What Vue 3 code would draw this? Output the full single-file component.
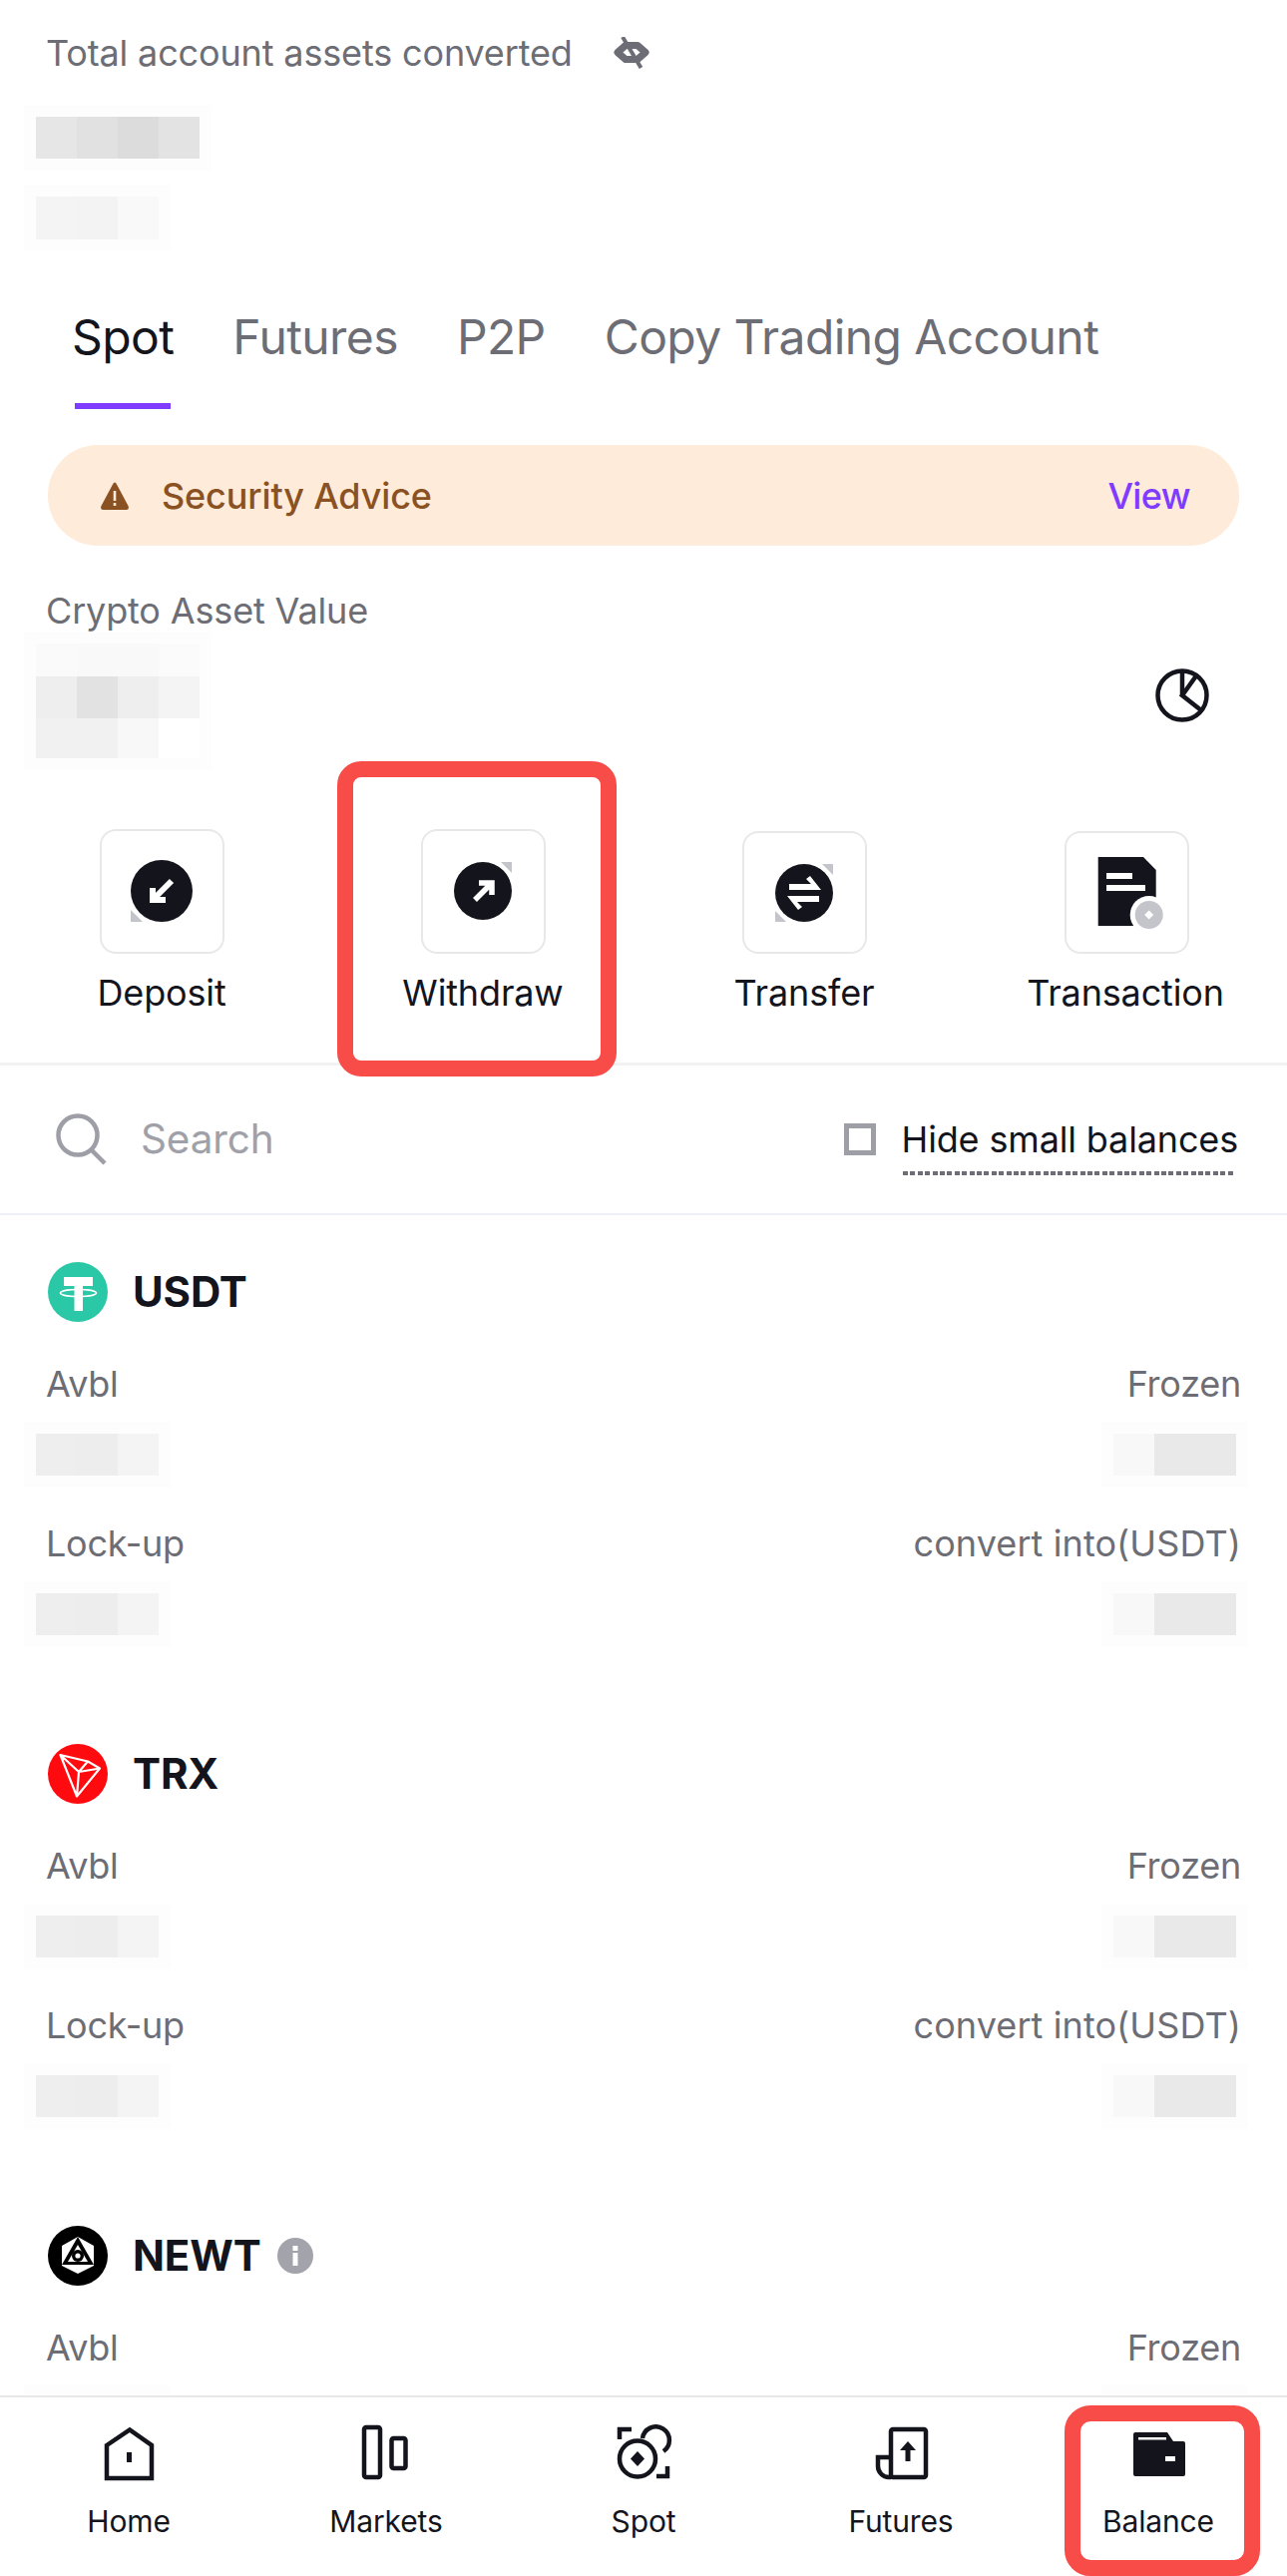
<script setup>
// Balance page of the exchange app. Grey pixel cells are the censored amounts.
const tabs = ['Spot', 'Futures', 'P2P', 'Copy Trading Account']

const totalMain = ['#e6e6e6', '#e1e1e1', '#dcdcdc', '#e3e3e3']
const totalSub = ['#f4f4f4', '#f3f3f3', '#f9f9f9']
const cryptoRows = [
  { h: 33, cells: ['#fafafa', '#f9f9f9', '#f9f9f9', '#fbfbfb'] },
  { h: 42, cells: ['#eeeeee', '#e2e2e2', '#eeeeee', '#f4f4f4'] },
  { h: 40, cells: ['#f1f1f1', '#f1f1f1', '#f8f8f8', '#ffffff'] }
]

const leftCells = ['#eeeeee', '#ededed', '#f4f4f4']
const rightCells = ['#f8f8f8', '#e9e9e9', '#e9e9e9']

// the last coin runs under the bottom bar, only its first row shows
const coins = [
  { name: 'USDT', info: false, cut: false },
  { name: 'TRX', info: false, cut: false },
  { name: 'NEWT', info: true, cut: true }
]

const navItems = ['Home', 'Markets', 'Spot', 'Futures', 'Balance']
</script>

<template>
  <div class="page">
    <main class="content">
      <section class="total">
        <div class="total-title">
          <span>Total account assets converted</span>
          <svg class="eye" viewBox="0 0 36 32" width="36" height="32">
            <path d="M4 15.5 L12 8.5 H24 L32 15.5 L24 22.5 H12 Z" fill="#fff" stroke="#6c6d75" stroke-width="7" stroke-linejoin="round" />
            <path d="M9 0 L27.5 31" stroke="#6c6d75" stroke-width="4" />
          </svg>
        </div>
        <div class="pix total-main">
          <i v-for="(c, n) in totalMain" :key="n" :style="{ background: c }"></i>
        </div>
        <div class="pix total-sub">
          <i v-for="(c, n) in totalSub" :key="n" :style="{ background: c }"></i>
        </div>
      </section>

      <nav class="tabs">
        <div v-for="(t, n) in tabs" :key="t" class="tab" :class="{ active: n === 0 }">
          <span>{{ t }}</span>
          <b v-if="n === 0"></b>
        </div>
      </nav>

      <div class="advice">
        <svg viewBox="0 0 30 30" width="30" height="30">
          <path d="M15 1.5 Q16 1.5 17 3.5 L28.5 25 Q30 29 26.5 29 H3.5 Q0 29 1.5 25 L13 3.5 Q14 1.5 15 1.5 Z" fill="#8a5222" />
          <rect x="13.7" y="10" width="2.6" height="10" fill="#feebd9" />
          <rect x="13.7" y="22" width="2.6" height="3" fill="#feebd9" />
        </svg>
        <span class="advice-text">Security Advice</span>
        <span class="advice-view">View</span>
      </div>

      <div class="crypto-title">Crypto Asset Value</div>
      <div class="crypto-row">
        <div class="crypto-pix">
          <div v-for="(r, n) in cryptoRows" :key="n" class="pix" :style="{ height: r.h + 'px' }">
            <i v-for="(c, k) in r.cells" :key="k" :style="{ background: c }"></i>
          </div>
        </div>
        <svg class="pie" viewBox="0 0 54 54" width="54" height="54" fill="none" stroke="#14151c" stroke-width="4.5">
          <circle cx="27" cy="27" r="24.5" />
          <path d="M42 6 L27 27 L46 42" />
          <path d="M27 3 V27" />
        </svg>
      </div>

      <section class="actions">
        <div class="action">
          <div class="action-box">
            <svg viewBox="0 0 121 121" width="121" height="121">
              <g transform="translate(29 29)">
                <polygon points="0,50 0,62 12,62" fill="#c4c5cb" />
                <circle cx="31" cy="31" r="31" fill="#14151c" />
                <path d="M22 28 V40 H35 M22 40 L41 21" fill="none" stroke="#fff" stroke-width="6" />
              </g>
            </svg>
          </div>
          <span>Deposit</span>
        </div>
        <div class="action">
          <div class="action-box">
            <svg viewBox="0 0 121 121" width="121" height="121">
              <g transform="translate(31 31)">
                <polygon points="47,0 58,0 58,11" fill="#c4c5cb" />
                <circle cx="29" cy="29" r="29" fill="#14151c" />
                <path d="M25 21 H38 V33 M38 21 L21 38" fill="none" stroke="#fff" stroke-width="5.5" />
              </g>
            </svg>
          </div>
          <span>Withdraw</span>
          <div class="mark mark-withdraw"></div>
        </div>
        <div class="action">
          <div class="action-box lower">
            <svg viewBox="0 0 121 119" width="121" height="119">
              <g transform="translate(31 31)">
                <polygon points="47,0 58,0 58,11" fill="#c4c5cb" />
                <polygon points="0,47 0,58 11,58" fill="#c4c5cb" />
                <circle cx="29" cy="29" r="29" fill="#14151c" />
                <polygon points="14,20 36,20 31,15 35,12 46,26 14,26" fill="#fff" />
                <polygon points="44,38 22,38 27,43 23,46 12,32 44,32" fill="#fff" />
              </g>
            </svg>
          </div>
          <span>Transfer</span>
        </div>
        <div class="action">
          <div class="action-box lower">
            <svg viewBox="0 0 121 119" width="121" height="119">
              <g transform="translate(31 24)">
                <polygon points="0.7,0 46,0 58.7,13 58.7,69 0.7,69" fill="#14151c" />
                <rect x="9" y="16" width="26" height="6" fill="#fff" />
                <rect x="9" y="28" width="39" height="6" fill="#fff" />
                <circle cx="51.7" cy="58" r="19" fill="#fff" />
                <circle cx="51.7" cy="58" r="14" fill="#c4c5cb" />
                <polygon points="51.7,53.5 56.2,58 51.7,62.5 47.2,58" fill="#fff" />
              </g>
            </svg>
          </div>
          <span>Transaction</span>
        </div>
      </section>

      <section class="search-row">
        <div class="search">
          <svg viewBox="0 0 54 54" width="54" height="54" fill="none" stroke="#9d9ea6" stroke-width="4.5">
            <circle cx="24" cy="23" r="19.5" />
            <path d="M38 38 L51 51" />
          </svg>
          <span>Search</span>
        </div>
        <div class="hide-small">
          <span class="check"></span>
          <span class="hide-label">Hide small balances</span>
        </div>
      </section>

      <article v-for="coin in coins" :key="coin.name" class="coin">
        <header class="coin-head">
          <svg v-if="coin.name === 'USDT'" viewBox="0 0 60 60" width="60" height="60">
            <circle cx="30" cy="30" r="30" fill="#2bc8a8" />
            <rect x="16" y="15" width="29" height="9" fill="#fff" />
            <rect x="26.5" y="24" width="8.5" height="25" fill="#fff" />
            <ellipse cx="30.5" cy="31" rx="18" ry="3.5" fill="none" stroke="#fff" stroke-width="1.5" />
          </svg>
          <svg v-else-if="coin.name === 'TRX'" viewBox="0 0 60 60" width="60" height="60">
            <circle cx="30" cy="30" r="30" fill="#ff0a0f" />
            <path d="M12.5 11 L40 17.5 L52 24.5 L29 52.5 Z M12.5 11 L31 28 L29 52.5 M31 28 L52 24.5 M31 28 L40 17.5" fill="none" stroke="#fff" stroke-width="2.2" stroke-linejoin="round" />
          </svg>
          <svg v-else viewBox="0 0 60 60" width="60" height="60">
            <circle cx="30" cy="30" r="30" fill="#000" />
            <polygon points="30,11 46,20 46,40 30,48 14,40 14,20" fill="#fff" />
            <polygon points="30,11 46,39 14,39" fill="#000" />
            <polygon points="30,19 40,36 20,36" fill="#fff" />
            <circle cx="30" cy="30" r="6" fill="#000" />
            <circle cx="30" cy="30" r="2.6" fill="#fff" />
          </svg>
          <h2>{{ coin.name }}</h2>
          <svg v-if="coin.info" class="info" viewBox="0 0 36 36" width="36" height="36">
            <circle cx="18" cy="18" r="18" fill="#a2a3ab" />
            <rect x="15.5" y="15" width="5" height="13" fill="#fff" />
            <rect x="15.5" y="8" width="5" height="5" fill="#fff" />
          </svg>
        </header>
        <div class="stats">
          <div class="stat">
            <span>Avbl</span>
            <div class="pix stat-pix"><i v-for="(c, n) in leftCells" :key="n" :style="{ background: c }"></i></div>
          </div>
          <div class="stat right">
            <span>Frozen</span>
            <div class="pix stat-pix"><i v-for="(c, n) in rightCells" :key="n" :style="{ background: c }"></i></div>
          </div>
          <template v-if="!coin.cut">
            <div class="stat">
              <span>Lock-up</span>
              <div class="pix stat-pix"><i v-for="(c, n) in leftCells" :key="n" :style="{ background: c }"></i></div>
            </div>
            <div class="stat right">
              <span class="long">convert into(USDT)</span>
              <div class="pix stat-pix"><i v-for="(c, n) in rightCells" :key="n" :style="{ background: c }"></i></div>
            </div>
          </template>
        </div>
      </article>
    </main>

    <footer class="bottom-nav">
      <div v-for="item in navItems" :key="item" class="nav-item">
        <svg v-if="item === 'Home'" viewBox="0 0 60 60" width="60" height="60" fill="none" stroke="#14151c" stroke-width="4.5">
          <path d="M8 21 L31 5.5 L53 21 V54 H8 Z" />
          <rect x="28" y="28" width="5" height="10" fill="#14151c" stroke="none" />
        </svg>
        <svg v-else-if="item === 'Markets'" viewBox="0 0 60 60" width="60" height="60" fill="none" stroke="#14151c" stroke-width="4.5">
          <rect x="8" y="3" width="16" height="50" rx="2" />
          <rect x="35.5" y="14" width="14" height="30" rx="2" />
        </svg>
        <svg v-else-if="item === 'Spot'" viewBox="0 0 60 60" width="60" height="60" fill="none" stroke="#14151c" stroke-width="4.5">
          <circle cx="24" cy="34.5" r="18" />
          <path d="M29 14 A13.5 13.5 0 1 1 50 27" />
          <path d="M6 15 V5 H18" />
          <path d="M54 42 V52 H43" />
          <polygon points="24,27 31,34.5 24,42 17,34.5" fill="#14151c" stroke="none" />
        </svg>
        <svg v-else-if="item === 'Futures'" viewBox="0 0 60 60" width="60" height="60" fill="none" stroke="#14151c" stroke-width="4.5">
          <rect x="20" y="5" width="35" height="48" rx="2" />
          <path d="M20 33 H7 V42 A11 11 0 0 0 18 53 H20" />
          <polygon points="37,17 45,26 39.5,26 39.5,37 34.5,37 34.5,26 29,26" fill="#14151c" stroke="none" />
        </svg>
        <svg v-else viewBox="0 0 60 60" width="60" height="60">
          <path d="M7 8 H39 L45 17 H55 Q57 17 57 19 V50 Q57 52 55 52 H7 Q5 52 5 50 V10 Q5 8 7 8 Z" fill="#14151c" />
          <rect x="10" y="13" width="28" height="2.5" fill="#fff" />
          <rect x="37" y="32" width="10" height="5" fill="#fff" />
        </svg>
        <span>{{ item }}</span>
        <div v-if="item === 'Balance'" class="mark mark-balance"></div>
      </div>
    </footer>
  </div>
</template>

<style scoped>
.page {
  display: flex;
  flex-direction: column;
  width: 1290px;
  height: 2582px;
  overflow: hidden;
  background: #fff;
  color: #14151c;
  font-family: Inter, "Liberation Sans", sans-serif;
  font-size: 36px;
  line-height: 44px;
  letter-spacing: -0.15px;
}

.content {
  flex: 1;
  min-height: 0;
  overflow: hidden;
}

/* censored amounts */
.pix {
  display: flex;
}
.pix i {
  display: block;
  width: 41px;
  height: 100%;
}
.total-main,
.total-sub,
.crypto-pix,
.stat-pix {
  box-shadow: 0 0 0 12px #fdfdfd;
}

.total {
  padding: 31px 0 0 36px;
}
.total-title {
  display: flex;
  align-items: center;
  padding-left: 10px;
  color: #6c6d75;
}
.eye {
  margin-left: 41px;
}
.total-main {
  width: fit-content;
  height: 42px;
  margin-top: 42px;
}
.total-sub {
  width: fit-content;
  height: 43px;
  margin-top: 38px;
}

.tabs {
  display: flex;
  gap: 59px;
  margin-top: 68px;
  padding-left: 72px;
  font-size: 48px;
  line-height: 60px;
  letter-spacing: -0.6px;
  color: #6c6d75;
}
.tab {
  display: flex;
  flex-direction: column;
  align-items: center;
}
.tab.active {
  color: #14151c;
}
.tab b {
  display: block;
  width: 96px;
  height: 6px;
  margin-top: 36px;
  background: #7f3cff;
}

.advice {
  display: flex;
  align-items: center;
  height: 101px;
  margin: 36px 48px 0;
  padding: 0 49px 0 52px;
  border-radius: 50px;
  background: #feebd9;
}
.advice-text {
  margin-left: 32px;
  font-weight: 500;
  color: #8a5222;
}
.advice-view {
  margin-left: auto;
  font-weight: 500;
  letter-spacing: -0.6px;
  color: #7f3cff;
}

.crypto-title {
  margin: 43px 0 0 46px;
  color: #6c6d75;
}
.crypto-row {
  display: flex;
  justify-content: space-between;
  margin-top: 11px;
  padding: 0 78px 0 36px;
}
.pie {
  margin-top: 25px;
}

.actions {
  display: grid;
  grid-template-columns: repeat(4, 322px);
  margin-top: 71px;
  padding: 0 1px 48px;
  border-bottom: 3px solid #f2f2f3;
}
.action {
  position: relative;
  display: flex;
  flex-direction: column;
  align-items: center;
}
.action-box {
  display: flex;
  box-sizing: border-box;
  width: 125px;
  height: 125px;
  margin-bottom: 17px;
  border: 2px solid #e8e8ea;
  border-radius: 16px;
}
.action-box.lower {
  height: 123px;
  margin-top: 2px;
}
.action:last-child .action-box {
  margin-left: 3px;
}

/* red annotation boxes */
.mark {
  position: absolute;
  box-sizing: border-box;
  border: 16px solid #f84c48;
}
.mark-withdraw {
  left: 15px;
  top: -68px;
  width: 280px;
  height: 316px;
  border-radius: 24px;
}
.mark-balance {
  left: 35px;
  top: 8px;
  width: 196px;
  height: 171px;
  border-radius: 26px;
}

.search-row {
  display: flex;
  align-items: center;
  justify-content: space-between;
  height: 148px;
  padding: 0 49px 0 54px;
  border-bottom: 2px solid #eef0f5;
}
.search {
  display: flex;
  align-items: center;
  gap: 33px;
  font-size: 40.5px;
  color: #a0a1a8;
}
.hide-small {
  display: flex;
  align-items: center;
  gap: 26px;
}
.check {
  box-sizing: border-box;
  width: 32px;
  height: 32px;
  border: 5px solid #9d9ea6;
}
.hide-label {
  position: relative;
}
.hide-label::after {
  content: "";
  position: absolute;
  left: 1px;
  right: 5px;
  bottom: -14px;
  height: 4px;
  background: repeating-linear-gradient(90deg, #6c6d75 0 5px, transparent 5px 7.4px);
}

.coin {
  height: 483px;
  box-sizing: border-box;
  padding-top: 47px;
}
.coin-head {
  display: flex;
  align-items: center;
  height: 60px;
  padding-left: 48px;
}
.coin-head h2 {
  margin: 0 0 0 25px;
  font-size: 42px;
  font-weight: 700;
  line-height: 60px;
}
.info {
  margin-left: 16px;
}

.stats {
  display: grid;
  grid-template-columns: 1fr 1fr;
  row-gap: 46px;
  margin-top: 40px;
  padding: 0 46px;
  letter-spacing: -0.25px;
  color: #6c6d75;
}
.stat {
  display: flex;
  flex-direction: column;
  align-items: flex-start;
}
.stat.right {
  align-items: flex-end;
}
.stat .long {
  letter-spacing: 0.1px;
}
.stat-pix {
  height: 42px;
  margin: 28px 0 0 -10px;
}
.stat.right .stat-pix {
  margin: 28px 5px 0 0;
}

.bottom-nav {
  position: relative;
  display: grid;
  flex-shrink: 0;
  grid-template-columns: repeat(5, 258px);
  height: 181px;
  box-sizing: border-box;
  border-top: 2px solid #e8e8e8;
  background: #fff;
}
.nav-item {
  position: relative;
  display: flex;
  flex-direction: column;
  align-items: center;
  padding-top: 27px;
  font-size: 30px;
  line-height: 40px;
}
.nav-item span {
  margin-top: 17px;
}
</style>
